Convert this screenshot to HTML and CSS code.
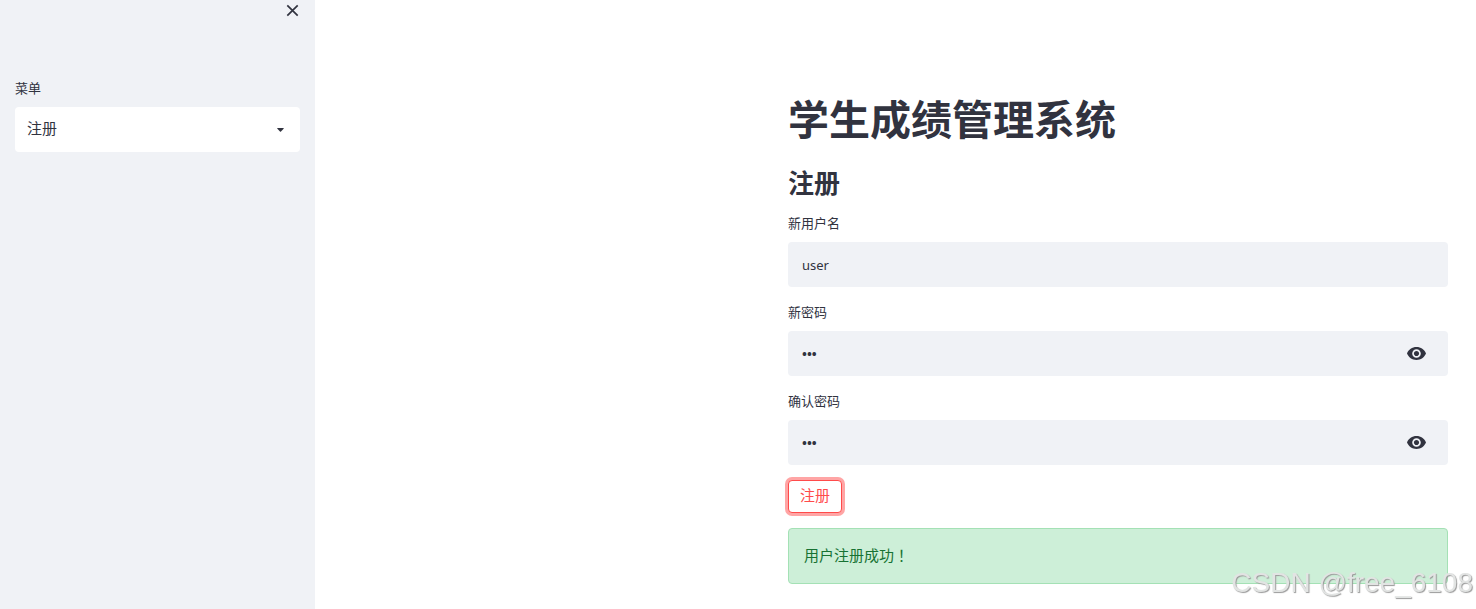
FILE: index.html
```html
<!DOCTYPE html>
<html lang="zh-CN">
<head>
  <meta charset="utf-8">
  <meta name="viewport" content="width=device-width, initial-scale=1">
  <title>学生成绩管理系统</title>
  <link rel="stylesheet" href="styles.css">
</head>
<body>
  <div class="app">
    <aside class="sidebar">
      <div class="sidebar-header">
        <button class="icon-button" type="button" aria-label="关闭侧边栏">
          <svg width="13" height="13" viewBox="0 0 13 13" fill="none" stroke="currentColor" stroke-width="1.7"><path d="M1.3 1.3l10.4 10.4M11.7 1.3L1.3 11.7"/></svg>
        </button>
      </div>
      <div class="field">
        <label class="label" for="menu">菜单</label>
        <div class="select-box">
          <select class="select" id="menu">
            <option>注册</option>
            <option>登录</option>
          </select>
          <svg class="caret" width="7" height="4" viewBox="0 0 7 4" fill="currentColor" aria-hidden="true"><path d="M.7 0h5.6q.9 0 .3.7L4 3.6q-.5.5-1 0L.4.7Q-.2 0 .7 0z"/></svg>
        </div>
      </div>
    </aside>
    <main class="main">
      <form class="form">
        <h1 class="title">学生成绩管理系统</h1>
        <h2 class="subtitle">注册</h2>
        <div class="fields">
          <div class="field">
            <label class="label" for="username">新用户名</label>
            <div class="input-box">
              <input class="input" id="username" type="text" value="user">
            </div>
          </div>
          <div class="field">
            <label class="label" for="password">新密码</label>
            <div class="input-box">
              <input class="input password" id="password" type="password" value="123">
              <button class="icon-button" type="button" aria-label="显示密码">
                <svg width="19" height="13" viewBox="1 4.5 22 15" fill="currentColor"><path d="M12 4.5C7 4.5 2.73 7.61 1 12c1.73 4.39 6 7.5 11 7.5s9.27-3.11 11-7.5c-1.73-4.39-6-7.5-11-7.5zM12 17c-2.76 0-5-2.24-5-5s2.24-5 5-5 5 2.24 5 5-2.24 5-5 5zm0-8c-1.66 0-3 1.34-3 3s1.34 3 3 3 3-1.34 3-3-1.34-3-3-3z"/></svg>
              </button>
            </div>
          </div>
          <div class="field">
            <label class="label" for="confirm">确认密码</label>
            <div class="input-box">
              <input class="input password" id="confirm" type="password" value="123">
              <button class="icon-button" type="button" aria-label="显示确认密码">
                <svg width="19" height="13" viewBox="1 4.5 22 15" fill="currentColor"><path d="M12 4.5C7 4.5 2.73 7.61 1 12c1.73 4.39 6 7.5 11 7.5s9.27-3.11 11-7.5c-1.73-4.39-6-7.5-11-7.5zM12 17c-2.76 0-5-2.24-5-5s2.24-5 5-5 5 2.24 5 5-2.24 5-5 5zm0-8c-1.66 0-3 1.34-3 3s1.34 3 3 3 3-1.34 3-3-1.34-3-3-3z"/></svg>
              </button>
            </div>
          </div>
          <button class="submit" type="button">注册</button>
          <div class="alert" role="status">用户注册成功<span class="mark" lang="zh-TW">！</span></div>
        </div>
      </form>
    </main>
  </div>
  <div class="watermark">CSDN @free_6108</div>
</body>
</html>
```

FILE: styles.css
```css
* {
  box-sizing: border-box;
}

body {
  margin: 0;
  color: #31333f;
  background: #fff;
  font: 15px/24px "Noto Sans", "Noto Sans CJK SC", sans-serif;
}

.app {
  display: flex;
  min-height: 100vh;
}

.sidebar {
  flex: 0 0 315px;
  padding: 0 15px;
  background: #f0f2f6;
}

.sidebar-header {
  display: flex;
  justify-content: flex-end;
  height: 78px;
  padding: 4px 1px 0 0;
}

.icon-button {
  display: flex;
  align-self: flex-start;
  padding: 0;
  border: 0;
  color: inherit;
  background: none;
}

.field {
  display: flex;
  flex-direction: column;
  gap: 9px;
}

.label {
  font-size: 13px;
  line-height: 20px;
}

.select-box,
.input-box {
  display: flex;
  align-items: center;
  height: 45px;
  border-radius: 4px;
}

.select-box {
  position: relative;
  background: #fff;
}

.select {
  width: 100%;
  height: 100%;
  padding: 0 12px 3px;
  border: 0;
  color: inherit;
  background: none;
  font: inherit;
  appearance: none;
}

.caret {
  position: absolute;
  right: 16px;
  pointer-events: none;
}

.main {
  display: flex;
  flex: 1;
  justify-content: flex-end;
  padding: 95px 28px 24px;
}

.form {
  width: 100%;
  max-width: 660px;
}

.title {
  margin: 0 0 23px;
  font-size: 41px;
  line-height: 49px;
}

.subtitle {
  margin: 0 0 14px;
  font-size: 26px;
  line-height: 32px;
}

.fields {
  display: flex;
  flex-direction: column;
  gap: 15px;
}

.input-box {
  padding-right: 22px;
  background: #f0f2f6;
}

.input-box .icon-button {
  align-self: center;
}

.input {
  flex: 1;
  min-width: 0;
  height: 100%;
  padding: 0 14px;
  border: 0;
  color: inherit;
  background: none;
  font: inherit;
  font-size: 13px;
}

.password {
  font-weight: 700;
}

.submit {
  align-self: flex-start;
  padding: 2px 11px 5px;
  border: 1px solid #ff4b4b;
  border-radius: 4px;
  color: #ff4b4b;
  background: #fff;
  font: inherit;
  box-shadow: 0 0 0 3px #ffa5a5;
}

.alert {
  padding: 14px 15px 16px;
  border: 1px solid #a4e1b5;
  border-radius: 4px;
  color: #177233;
  background: #cdefd8;
}

.mark {
  font-family: "Noto Sans CJK TC", sans-serif;
  line-height: 1;
}

.watermark {
  position: fixed;
  right: 3px;
  bottom: 10px;
  color: #e2e4e3;
  font: 28px/32px "Liberation Sans", sans-serif;
  text-shadow: 1px 1px 1px #999;
  pointer-events: none;
}
```
